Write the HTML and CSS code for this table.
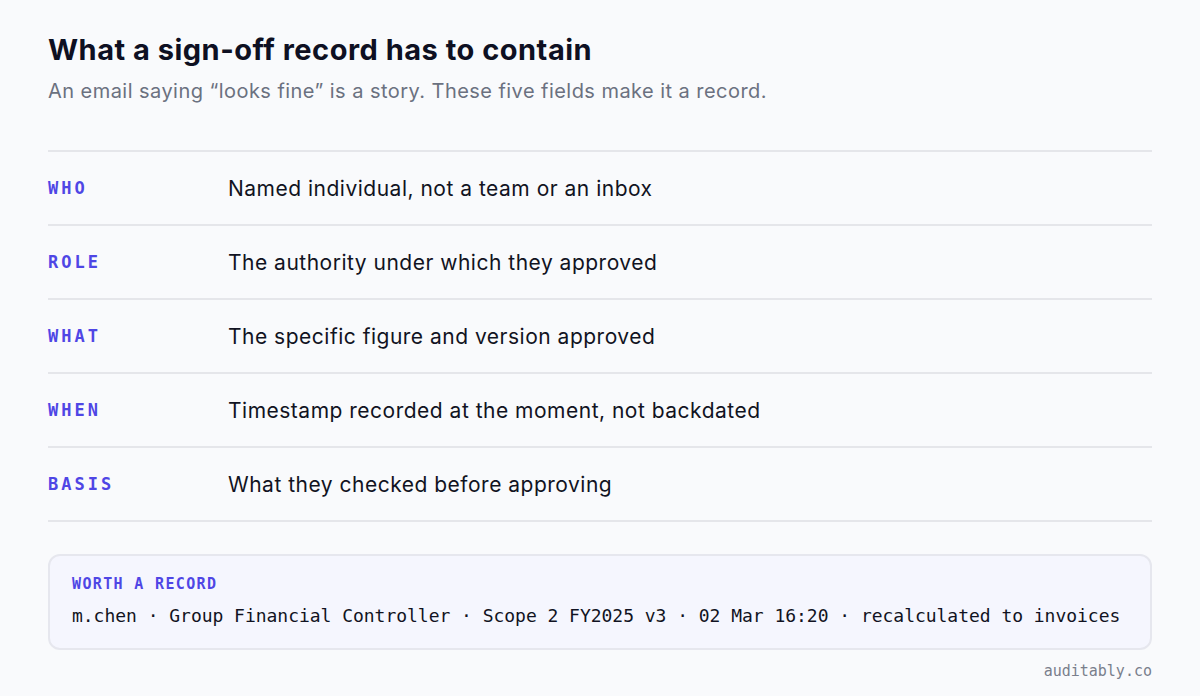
FILE: index.html
```html
<!DOCTYPE html>
<html>
<head>
<meta charset="utf-8">
<link rel="stylesheet" href="styles.css">
</head>
<body>
<main class="page">
  <h1 class="title">What a sign-off record has to contain</h1>
  <p class="subtitle">An email saying “looks fine” is a story. These five fields make it a record.</p>
  <div class="fields">
    <div class="row"><span class="key">WHO</span><span class="val">Named individual, not a team or an inbox</span></div>
    <div class="row"><span class="key">ROLE</span><span class="val">The authority under which they approved</span></div>
    <div class="row"><span class="key">WHAT</span><span class="val">The specific figure and version approved</span></div>
    <div class="row"><span class="key">WHEN</span><span class="val">Timestamp recorded at the moment, not backdated</span></div>
    <div class="row"><span class="key">BASIS</span><span class="val">What they checked before approving</span></div>
  </div>
  <div class="card">
    <div class="card-label">WORTH A RECORD</div>
    <div class="card-body">m.chen · Group Financial Controller · Scope 2 FY2025 v3 · 02 Mar 16:20 · recalculated to invoices</div>
  </div>
  <div class="footer">auditably.co</div>
</main>
</body>
</html>
```

FILE: styles.css
```css
* { box-sizing: border-box; }
html, body { margin: 0; padding: 0; }
body {
  background: #f9fafc;
  font-family: Inter, "Noto Sans", sans-serif;
  color: #0f1222;
}
.page {
  padding: 33px 48px 0 48px;
}
.title {
  margin: 0;
  font-size: 29px;
  line-height: 34px;
  font-weight: 700;
  color: #0e1022;
  letter-spacing: 0.5px;
}
.subtitle {
  margin: 10px 0 0 0;
  font-size: 20px;
  line-height: 28px;
  color: #6b7180;
  letter-spacing: 0.45px;
}
.fields {
  margin-top: 45px;
  border-top: 2px solid #e5e6ea;
}
.row {
  display: flex;
  align-items: center;
  height: 74px;
  border-bottom: 2px solid #e5e6ea;
}
.key {
  width: 180px;
  flex: none;
  font-family: "DejaVu Sans Mono", "Liberation Mono", monospace;
  font-weight: 700;
  font-size: 17px;
  letter-spacing: 3px;
  color: #4f46e5;
}
.val {
  font-size: 21px;
  letter-spacing: 0.5px;
  color: #111322;
}
.card {
  margin-top: 32px;
  height: 96px;
  border: 2px solid #e6e7ee;
  border-radius: 12px;
  background: #f5f6fe;
  padding: 18px 22px 0 22px;
  font-family: "DejaVu Sans Mono", "Liberation Mono", monospace;
}
.card-label {
  font-size: 15px;
  line-height: 20px;
  font-weight: 700;
  letter-spacing: 1.35px;
  color: #4f46e5;
}
.card-body {
  margin-top: 10px;
  font-size: 18px;
  line-height: 24px;
  letter-spacing: -0.03px;
  color: #111322;
  white-space: nowrap;
}
.footer {
  margin-top: 11px;
  text-align: right;
  font-family: "DejaVu Sans Mono", "Liberation Mono", monospace;
  font-size: 15px;
  line-height: 20px;
  color: #7a7f8c;
}
```
